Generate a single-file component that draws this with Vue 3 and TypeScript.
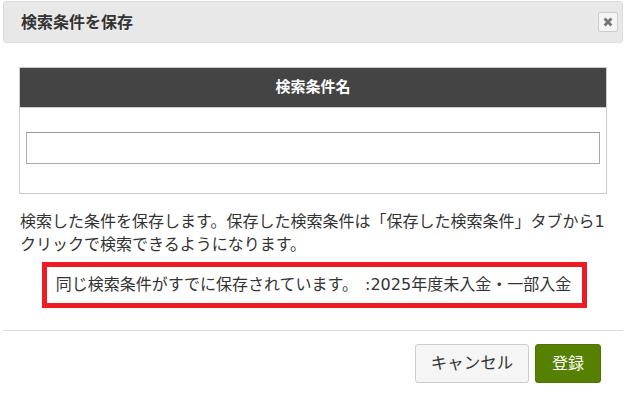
<script setup lang="ts">
import { ref, type Ref } from 'vue'

const conditionName: Ref<string> = ref('')
</script>

<template>
  <div class="dialog">
    <header class="title-bar">
      <span class="title">検索条件を保存</span>
      <button type="button" class="close" aria-label="閉じる">
        <svg width="10" height="10" viewBox="0 0 10 10">
          <path d="M2.6 0.6 5 3 7.4 0.6 9.4 2.6 7 5 9.4 7.4 7.4 9.4 5 7 2.6 9.4 0.6 7.4 3 5 0.6 2.6Z" fill="#777" />
        </svg>
      </button>
    </header>

    <div class="content">
      <section class="name-box">
        <div class="name-head">検索条件名</div>
        <div class="name-body">
          <input v-model="conditionName" type="text" aria-label="検索条件名" />
        </div>
      </section>

      <p class="note">検索した条件を保存します。保存した検索条件は「保存した検索条件」タブから1クリックで検索できるようになります。</p>

      <p class="notice">同じ検索条件がすでに保存されています。 :2025年度未入金・一部入金</p>
    </div>

    <footer class="actions">
      <button type="button" class="btn cancel">キャンセル</button>
      <button type="button" class="btn submit">登録</button>
    </footer>
  </div>
</template>

<style>
html,
body {
  background: #ffffff;
}
</style>

<style scoped>
.dialog {
  width: 626px;
  height: 401px;
  padding: 1px 3px 0;
  box-sizing: border-box;
  font-family: "Noto Sans CJK JP", "Liberation Sans", sans-serif;
  color: #333333;
  overflow: hidden;
}

.title-bar {
  display: flex;
  align-items: center;
  justify-content: space-between;
  height: 42px;
  box-sizing: border-box;
  padding: 0 4px 0 17px;
  background: #e8e8e8;
  border: 1px solid #dddddd;
  border-radius: 3px;
}

.title {
  margin-bottom: 3px;
  font-size: 16px;
  font-weight: 700;
  color: #333333;
}

.close {
  display: flex;
  align-items: center;
  justify-content: center;
  width: 20px;
  height: 20px;
  padding: 0;
  background: #f5f5f5;
  border: 1px solid #cccccc;
  border-radius: 2px;
}

.content {
  padding: 24px 16px 0;
}

.name-box {
  height: 127px;
  box-sizing: border-box;
  border: 1px solid #cccccc;
}

.name-head {
  height: 39px;
  line-height: 36px;
  background: #444444;
  color: #ffffff;
  font-size: 15px;
  font-weight: 700;
  text-align: center;
}

.name-body {
  padding: 24px 6px 0;
  border-top: 1px solid #cccccc;
}

.name-body input {
  display: block;
  width: 100%;
  height: 32px;
  box-sizing: border-box;
  padding: 0 6px;
  border: 1px solid #aaaaaa;
  border-top-color: #999999;
  outline: none;
}

.note {
  margin: 16px 0 0;
  padding-left: 1px;
  font-family: "DejaVu Sans", "Noto Sans CJK JP", sans-serif;
  font-size: 16px;
  line-height: 23px;
  color: #333333;
}

.notice {
  margin: 6px 20px 0 23px;
  height: 46px;
  box-sizing: border-box;
  padding-right: 2px;
  border: 5px solid #ed1c24;
  font-family: "DejaVu Sans", "Noto Sans CJK JP", sans-serif;
  font-size: 16px;
  word-spacing: 2px;
  line-height: 36px;
  text-align: center;
  white-space: nowrap;
  color: #333333;
}

.actions {
  display: flex;
  justify-content: flex-end;
  gap: 6px;
  margin-top: 22px;
  padding: 13px 22px 0 0;
  border-top: 1px solid #dddddd;
}

.btn {
  height: 39px;
  box-sizing: border-box;
  border-radius: 3px;
  font-family: inherit;
  font-size: 16px;
  padding: 0 0 4px;
}

.cancel {
  width: 114px;
  background: #f5f5f5;
  border: 1px solid #cccccc;
  color: #333333;
  font-size: 16.5px;
}

.submit {
  width: 66px;
  background: #568000;
  border: 1px solid #4f7500;
  color: #ffffff;
}
</style>
